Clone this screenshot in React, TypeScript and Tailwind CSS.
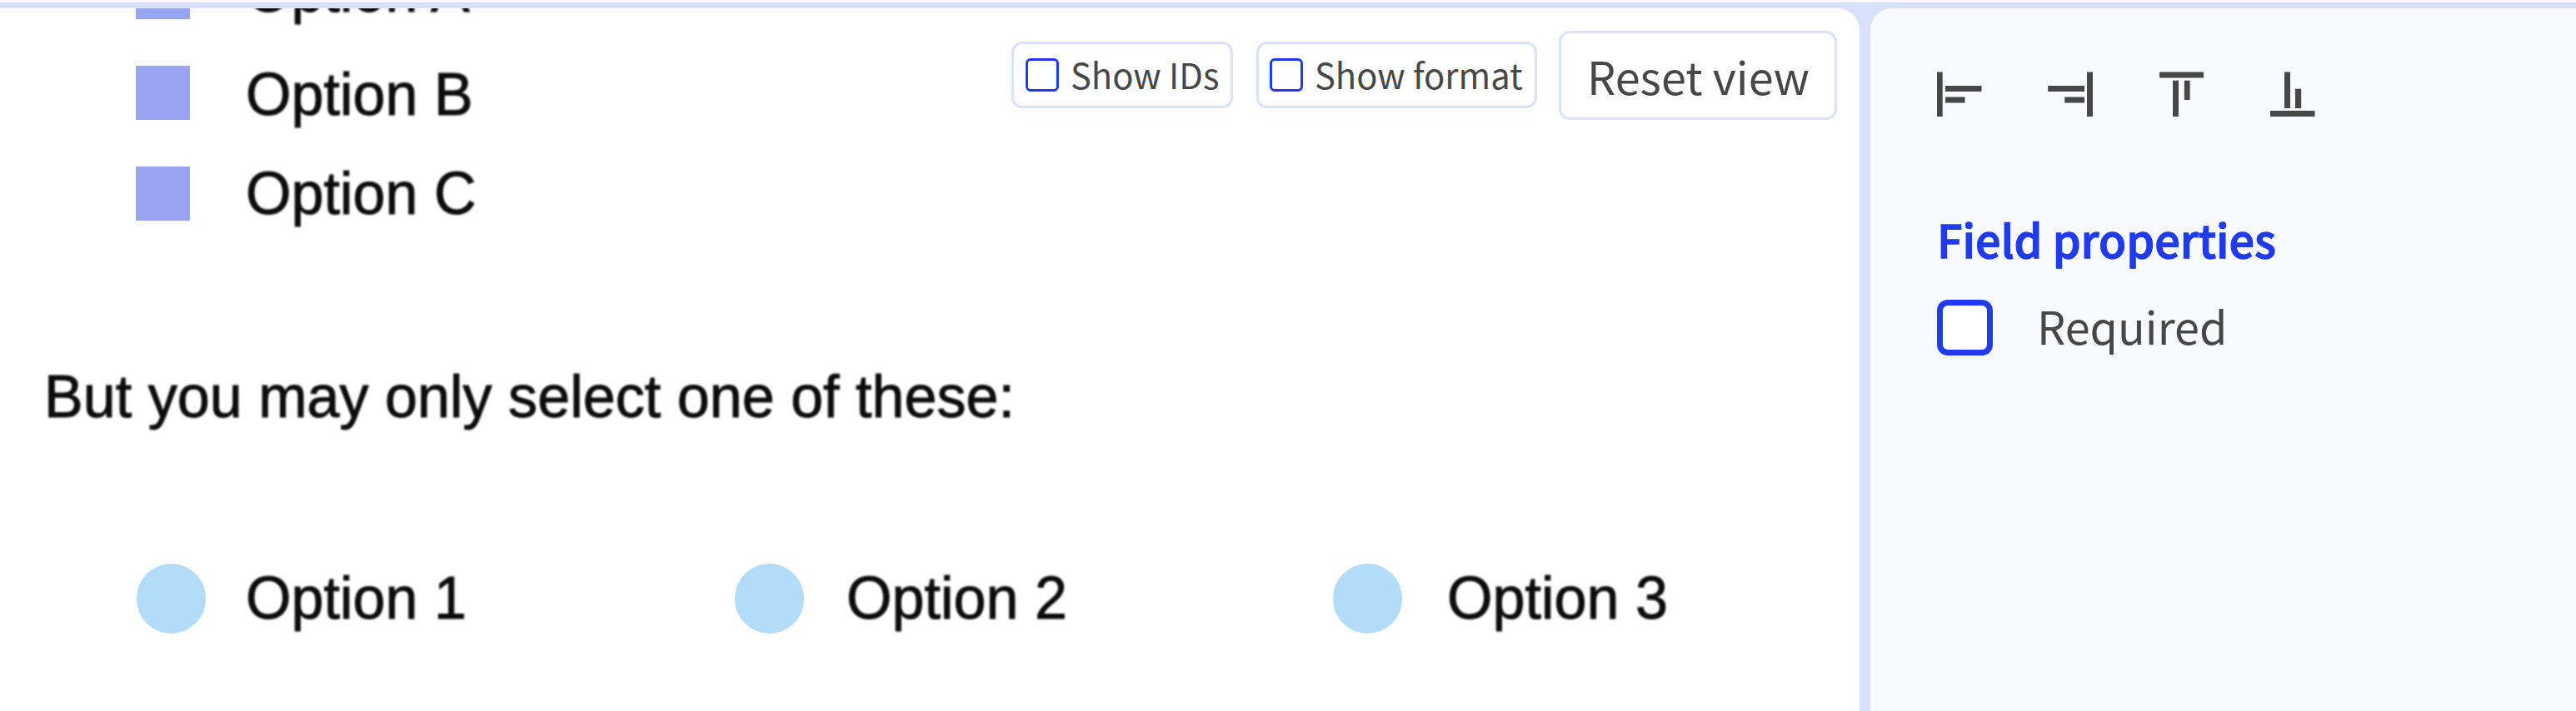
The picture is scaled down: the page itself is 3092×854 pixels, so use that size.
import type { ReactNode } from "react";

const DOC_FONT = "font-['Liberation_Sans',Arial,sans-serif] text-[70.1px] text-[#0c0c0c]";

function DocText({ className = "", children }: { className?: string; children: ReactNode }) {
  return (
    <span
      className={`${DOC_FONT} block origin-[0_80%] scale-y-[1.03] whitespace-nowrap blur-[0.9px] [-webkit-text-stroke:1px_#0c0c0c] ${className}`}
    >
      {children}
    </span>
  );
}

function CheckboxField({ label, className = "" }: { label: string; className?: string }) {
  return (
    <div className="flex h-[65px] items-start">
      <div className="h-[65px] w-[65px] shrink-0 bg-[#99a5f3]" />
      <DocText className={`ml-[67px] leading-[65px] ${className}`}>{label}</DocText>
    </div>
  );
}

function RadioField({ label, className = "" }: { label: string; className?: string }) {
  return (
    <div className="flex w-[718px] shrink-0 items-start">
      <div className="h-[84px] w-[83px] shrink-0 rounded-full bg-[#b3dcf9]" />
      <DocText className={`leading-[84px] ${className}`}>{label}</DocText>
    </div>
  );
}

function Toggle({ label, className }: { label: string; className: string }) {
  return (
    <label
      className={`mt-[13px] flex h-[80px] items-center rounded-[13px] border-[3px] border-[#d9e1fb] bg-white ${className}`}
    >
      <span className="h-[40px] w-[40px] shrink-0 rounded-[6px] border-[3px] border-[#1f3bea] bg-white" />
      <span className="ml-[14px] pb-[3px] text-[41.7px] leading-[60px] whitespace-nowrap">{label}</span>
    </label>
  );
}

type Bar = [x: number, y: number, w: number, h: number];

function AlignIcon({ bars, label }: { bars: Bar[]; label: string }) {
  return (
    <button aria-label={label} className="h-[54px] w-[54px]">
      <svg viewBox="0 0 54 54" className="block h-[54px] w-[54px] overflow-visible" fill="#474747">
        {bars.map(([x, y, w, h], i) => (
          <rect key={i} x={x} y={y} width={w} height={h} />
        ))}
      </svg>
    </button>
  );
}

export default function App() {
  return (
    <div className="flex h-[854px] w-[3092px] flex-col overflow-hidden bg-[#d9e0fa] font-['Noto_Sans_CJK_JP','Noto_Sans',sans-serif] text-[#474747]">
      <div className="h-[3px] shrink-0 bg-[#f9faff]" />
      <div className="mt-[7px] flex min-h-0 flex-1 gap-[13px]">
        <main className="relative w-[2232px] shrink-0 overflow-hidden rounded-tr-[26px] bg-white">
          <div className="-mt-[52px] flex flex-col gap-[56px] pl-[163px]">
            <CheckboxField label="Option A" />
            <CheckboxField label="Option B" className="mt-[3px]" />
            <CheckboxField label="Option C" className="mt-px" />
          </div>
          <DocText className="mt-[172px] ml-[53px] leading-[80px]">
            But you may only select one of these:
          </DocText>
          <div className="mt-[160px] flex pl-[164px]">
            <RadioField label="Option 1" className="ml-[48px]" />
            <RadioField label="Option 2" className="ml-[51px]" />
            <RadioField label="Option 3" className="ml-[54px]" />
          </div>
          <div className="absolute top-[27px] right-[27px] flex items-start">
            <Toggle label="Show IDs" className="w-[266px] pl-[14px]" />
            <Toggle label="Show format" className="ml-[28px] w-[337px] pl-[13px]" />
            <button className="ml-[26px] flex h-[107px] w-[334px] items-center rounded-[13px] border-[3px] border-[#d9e1fb] bg-white pl-[31px] text-[54px] leading-[78px] whitespace-nowrap">
              Reset view
            </button>
          </div>
        </main>
        <aside className="flex-1 rounded-tl-[26px] bg-[#f9faff] pt-[76px] pl-[80px]">
          <div className="flex gap-[79px]">
            <AlignIcon label="Align left" bars={[[0, 0.5, 6.7, 53.5], [10, 17, 43.5, 7], [10, 30.5, 23.5, 7]]} />
            <AlignIcon label="Align right" bars={[[47, 0.5, 7, 53.5], [0.2, 17, 43.8, 7], [20.2, 30.5, 23.8, 7]]} />
            <AlignIcon label="Align top" bars={[[1, 0.5, 53, 7], [17, 10.7, 7, 43.3], [30.8, 10.7, 6.8, 23.3]]} />
            <AlignIcon label="Align bottom" bars={[[1, 47, 53.5, 7], [18, 0.5, 7, 43.5], [31, 20.7, 7.2, 23.3]]} />
          </div>
          <h2 className="mt-[107px] text-[53.9px] leading-[80px] font-medium whitespace-nowrap text-[#1f3bea] [-webkit-text-stroke:1.3px_#1f3bea]">
            Field properties
          </h2>
          <label className="mt-[33px] flex items-center">
            <span className="h-[67px] w-[67px] shrink-0 rounded-[13px] border-[7px] border-[#1f3bea] bg-white" />
            <span className="-mt-[8px] -mb-px ml-[53px] text-[54px] leading-[67px] whitespace-nowrap">Required</span>
          </label>
        </aside>
      </div>
    </div>
  );
}
